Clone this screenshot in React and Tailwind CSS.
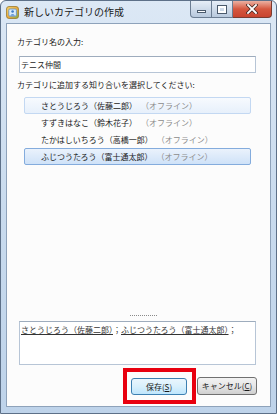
import React from 'react';

const jp = { fontFamily: '"Noto Sans CJK JP", "Noto Sans", sans-serif' };

const contacts = [
  { name: 'さとうじろう（佐藤二郎）', state: 'hover' },
  { name: 'すずきはなこ（鈴木花子）', state: '' },
  { name: 'たかはしいちろう（高橋一郎）', state: '' },
  { name: 'ふじつうたろう（富士通太郎）', state: 'selected' },
];

function WindowIcon() {
  return (
    <svg width="13" height="13" viewBox="0 0 13 13">
      <defs>
        <linearGradient id="ic" x1="0" y1="0" x2="1" y2="1">
          <stop offset="0" stopColor="#f6d36a" />
          <stop offset="0.55" stopColor="#e9a93c" />
          <stop offset="1" stopColor="#7fb24a" />
        </linearGradient>
      </defs>
      <rect x="0.5" y="0.5" width="12" height="12" rx="2.5" fill="url(#ic)" stroke="#9a7a2e" strokeWidth="0.8" />
      <rect x="2.8" y="3" width="7.6" height="7.2" rx="1.2" fill="#d9ecfb" stroke="#5b8fc9" strokeWidth="0.8" />
      <circle cx="6.6" cy="5.5" r="1.3" fill="#3d7bc7" />
      <path d="M4.2 9.6 Q6.6 6.9 9 9.6 Z" fill="#3d7bc7" />
    </svg>
  );
}

function CaptionButtons() {
  return (
    <div className="flex items-start mr-[4px]">
      <div className="w-[22px] h-[17px] border border-t-0 border-[#6b7d92] rounded-bl-[4px] bg-gradient-to-b from-[#e6eef7] to-[#b8c9dd] flex items-center justify-center">
        <div className="w-[9px] h-[3px] bg-white border border-[#4a5a6c] mt-[4px]" />
      </div>
      <div className="w-[21px] h-[17px] border border-t-0 border-l-0 border-[#6b7d92] bg-gradient-to-b from-[#e6eef7] to-[#b8c9dd] flex items-center justify-center">
        <div className="w-[8px] h-[7px] border-[2px] border-white ring-1 ring-[#4a5a6c]" />
      </div>
      <div className="w-[39px] h-[17px] border border-t-0 border-l-0 border-[#7a3b30] rounded-br-[4px] bg-gradient-to-b from-[#eab0a2] via-[#d5573f] to-[#c9442f] flex items-center justify-center">
        <svg width="12" height="10" viewBox="0 0 12 10">
          <path d="M2 1 L10 9 M10 1 L2 9" stroke="#4a2a24" strokeWidth="3.4" strokeLinecap="square" />
          <path d="M2 1 L10 9 M10 1 L2 9" stroke="#ffffff" strokeWidth="1.8" strokeLinecap="square" />
        </svg>
      </div>
    </div>
  );
}

function ContactRow({ name, state }) {
  const box =
    state === 'selected'
      ? 'border-[#84acdd] bg-gradient-to-b from-[#eaf2fc] to-[#cfe2f8]'
      : state === 'hover'
      ? 'border-[#c3d8f2] bg-gradient-to-b from-[#f7fafe] to-[#e7f0fb]'
      : 'border-transparent';
  return (
    <div className={`h-[17px] border rounded-[2px] flex items-center pl-[16px] ${box}`}>
      <span className="text-[#1a1a1a]">{name}</span>
      <span className="text-[#8c8c8c] ml-[4px]">（オフライン）</span>
    </div>
  );
}

function App() {
  return (
    <div className="w-[277px] h-[414px] bg-white">
      <div
        className="w-[277px] h-[414px] border border-[#5d7088] rounded-t-[6px] bg-gradient-to-b from-[#dce8f5] via-[#c9dbee] to-[#bed3ea] flex flex-col"
        style={jp}
      >
        <div className="h-[22px] flex items-start justify-between shrink-0">
          <div className="flex items-center h-[22px] pl-[5px] gap-[5px]">
            <WindowIcon />
            <span className="text-[10px] text-[#1b1b1b] leading-none">新しいカテゴリの作成</span>
          </div>
          <CaptionButtons />
        </div>

        <div className="mx-[5px] mb-[6px] flex-1 border border-[#8ea2ba] bg-[#fcfcfc] flex flex-col text-[8px] leading-[12px] text-[#1a1a1a]">
          <div className="mt-[12px] pl-[10px]">カテゴリ名の入力:</div>
          <div className="mt-[8px] ml-[12px] w-[237px] h-[17px] border border-[#b7c5d6] border-t-[#9eacbd] bg-white flex items-center pl-[1px]">
            テニス仲間
          </div>
          <div className="mt-[6px] pl-[10px]">カテゴリに追加する知り合いを選択してください:</div>
          <div className="mt-[6px] ml-[17px] w-[227px] flex flex-col">
            {contacts.map((c) => (
              <ContactRow key={c.name} name={c.name} state={c.state} />
            ))}
          </div>
          <div className="flex-1" />
          <div className="flex justify-center pl-[10px]">
            <div className="w-[27px] border-t border-dotted border-[#8a8a8a]" />
          </div>
          <div className="mt-[5px] ml-[12px] w-[237px] h-[44px] border border-[#b7c5d6] border-t-[#9eacbd] bg-white px-[1px] pt-[2px] text-[#333]">
            <span className="underline">さとうじろう（佐藤二郎）</span>
            <span>；</span>
            <span className="underline">ふじつうたろう（富士通太郎）</span>
            <span>；</span>
          </div>
          <div className="mt-[3px] mb-[2px] flex items-center pl-[116px]">
            <div className="border-4 border-[#e8000f] pl-[4px] pr-[5px] pt-[6px] pb-[5px]">
              <div className="w-[56px] h-[17px] border border-[#3c7fb1] rounded-[3px] bg-gradient-to-b from-[#eaf6fd] via-[#d9f0fc] to-[#bee6fd] flex items-center justify-center">
                保存(<span className="underline">S</span>)
              </div>
            </div>
            <div className="ml-[1px] w-[60px] h-[18px] border border-[#707070] rounded-[3px] bg-gradient-to-b from-[#f2f2f2] via-[#e6e6e6] to-[#cfcfcf] flex items-center justify-center">
              キャンセル(<span className="underline">C</span>)
            </div>
          </div>
        </div>
      </div>
    </div>
  );
}

export default App;
